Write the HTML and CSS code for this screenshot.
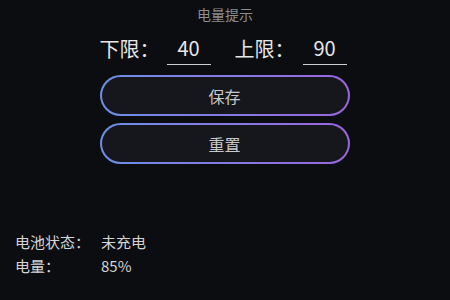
FILE: index.html
```html
<!DOCTYPE html>
<html lang="zh">
<head>
<meta charset="utf-8">
<link rel="stylesheet" href="styles.css">
</head>
<body>
<div class="page">
  <div class="title">电量提示</div>
  <div class="limits">
    <span class="label">下限：</span>
    <span class="field">40</span>
    <span class="label second">上限：</span>
    <span class="field">90</span>
  </div>
  <div class="buttons">
    <button class="btn">保存</button>
    <button class="btn">重置</button>
  </div>
  <div class="status">
    <div class="row"><span class="key">电池状态：</span><span class="val">未充电</span></div>
    <div class="row"><span class="key">电量：</span><span class="val">85%</span></div>
  </div>
</div>
</body>
</html>
```
FILE: styles.css
```css
html, body {
  margin: 0;
  padding: 0;
  background: #0c0d11;
  width: 450px;
  height: 300px;
  overflow: hidden;
  font-family: "Noto Sans CJK SC", "Noto Sans", sans-serif;
}
.page {
  display: flex;
  flex-direction: column;
}
.title {
  height: 28px;
  line-height: 28px;
  text-align: center;
  font-size: 14px;
  color: #8d8d8f;
}
.limits {
  margin-top: 4px;
  display: flex;
  justify-content: center;
  align-items: flex-end;
  padding-right: 4px;
}
.label {
  font-size: 20px;
  line-height: 32px;
  color: #e6e6e6;
  width: 67px;
}
.label.second {
  margin-left: 24px;
  width: 68px;
}
.field {
  width: 44px;
  height: 32px;
  line-height: 31px;
  text-align: center;
  font-size: 20px;
  color: #e6e6e6;
  border-bottom: 1px solid #d0d0d0;
}
.buttons {
  margin-top: 10px;
  display: flex;
  flex-direction: column;
  align-items: center;
  gap: 7px;
}
.btn {
  width: 250px;
  height: 41px;
  margin-left: -1px;
  border-radius: 21px;
  border: 2px solid transparent;
  background: linear-gradient(#16171c, #16171c) padding-box,
              linear-gradient(90deg, #6f8fe6, #9a66de) border-box;
  color: #c9c9cb;
  font-family: "Noto Sans CJK SC", "Noto Sans", sans-serif;
  font-size: 16px;
  padding: 0;
}
.status {
  margin-top: 66px;
  padding-left: 15px;
}
.row {
  display: flex;
  line-height: 24px;
  font-size: 15px;
  color: #d4d4d6;
}
.key {
  width: 86px;
}
```
